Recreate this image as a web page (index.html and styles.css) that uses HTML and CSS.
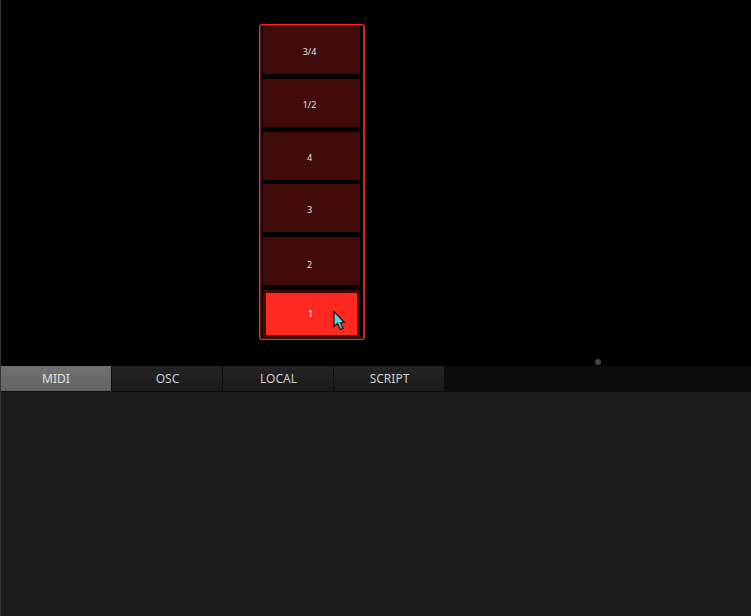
FILE: index.html
```html
<!DOCTYPE html>
<html lang="en">
<head>
<meta charset="utf-8">
<title>Editor</title>
<link rel="stylesheet" href="styles.css">
</head>
<body>
<main class="editor">
  <section class="canvas">
    <div class="radio">
      <div class="cell"><span class="label">3/4</span></div>
      <div class="cell"><span class="label">1/2</span></div>
      <div class="cell cell-late"><span class="label">4</span></div>
      <div class="cell cell-late"><span class="label">3</span></div>
      <div class="cell cell-low"><span class="label">2</span></div>
      <div class="cell cell-active"><span class="label">1</span></div>
    </div>
    <i class="handle"></i>
    <svg class="cursor" width="13" height="21" viewBox="0 0 13 21"><path d="M1 1.5V16.5L4.5 13.2L7.5 19.5L10 18.5L7.4 12.5H11.5Z" fill="#55dcdf" stroke="#1c1010" stroke-width="1.2"/></svg>
  </section>
  <nav class="tabs">
    <div class="tab tab-active"><span>MIDI</span></div>
    <div class="tab"><span>OSC</span></div>
    <div class="tab"><span>LOCAL</span></div>
    <div class="tab"><span>SCRIPT</span></div>
  </nav>
  <section class="panel"></section>
</main>
</body>
</html>
```
FILE: styles.css
```css
* { box-sizing: border-box; }
body { margin: 0; background: #1b1b1b; font-family: "Noto Sans", "Open Sans", sans-serif; }
.editor { display: flex; flex-direction: column; width: 751px; height: 616px; border-left: 1px solid #343434; overflow: hidden; }
.canvas { position: relative; flex: 0 0 366px; padding: 24px 0 0 258px; background: #000; }
.radio { width: 106px; height: 316px; padding: 1px 3px 0; border: 1px solid #f5281f; border-right: 2px solid #d4221b; border-radius: 3px; background: #000; box-shadow: inset 1px 1px 0 #7a150f, inset 0 -1px 0 #4a0d09; }
.cell { display: flex; align-items: center; justify-content: center; width: 97px; height: 48px; margin-bottom: 5px; border-radius: 1px; background: #400b08; color: #e4e4e4; }
.cell-late { margin-bottom: 4px; }
.cell-late + .cell-low { margin-top: 5px; }
.label { position: relative; top: 2px; left: -2px; font-size: 9px; line-height: 12px; }
.cell-low .label { top: 4px; }
.cell-active { margin-bottom: 0; border: 3px solid #400b08; background: #ff2a1f; }
.cell-active .label { top: 0; left: -1px; }
.handle { position: absolute; left: 594px; top: 358.5px; width: 6px; height: 6px; border-radius: 50%; background: #484444; }
.cursor { position: absolute; left: 332px; top: 310px; }
.tabs { display: flex; gap: 1px; flex: 0 0 26px; padding-bottom: 1px; background: #0c0c0c; }
.tab { display: flex; align-items: center; justify-content: center; width: 110px; height: 25px; background: linear-gradient(#242424, #1a1a1a); color: #ccc; font-size: 12px; line-height: 16px; }
.tab-active { background: linear-gradient(#717171, #626262); color: #e0e0e0; }
.tab span { padding-left: 1px; }
.tab-active span { padding-left: 0; }
.panel { flex: 1; background: #1b1b1b; }
```
